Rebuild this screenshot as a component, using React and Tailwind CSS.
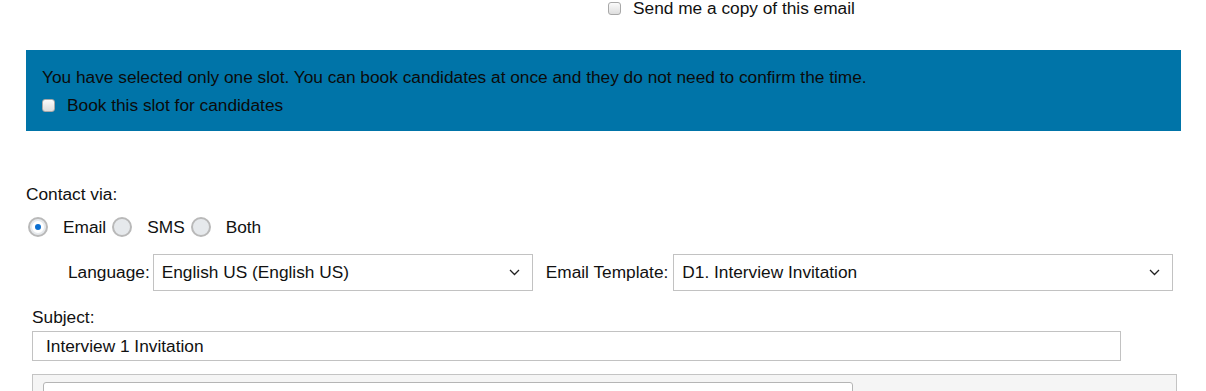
import React, { useState } from 'react'

function Checkbox({ checked, onChange }) {
  return (
    <button
      type="button"
      onClick={onChange}
      className="flex h-[13px] w-[13px] shrink-0 items-center justify-center rounded-[3px] border border-[#a8a8a8] bg-gradient-to-b from-[#fbfbfb] to-[#dedede]"
    >
      {checked && <span className="text-[10px] leading-none text-[#333]">✓</span>}
    </button>
  )
}

function Radio({ checked, onClick, label }) {
  return (
    <label className="flex cursor-pointer items-center" onClick={onClick}>
      <span className="flex h-[20px] w-[20px] items-center justify-center rounded-full border-2 border-[#b9b9b9] bg-[#e6e9ec]">
        {checked && <span className="box-content h-[6px] w-[6px] rounded-full border-[3px] border-white bg-[#0a6ed1]" />}
      </span>
      <span className="ml-[15px]">{label}</span>
    </label>
  )
}

function Select({ value, width }) {
  return (
    <div className={`flex h-[37px] items-center justify-between border border-[#c2c2c2] bg-white pl-[8px] pr-[12px] ${width}`}>
      <span>{value}</span>
      <svg width="11" height="7" viewBox="0 0 11 7" fill="none">
        <path d="M1 1l4.5 4.5L10 1" stroke="#222" strokeWidth="1.3" />
      </svg>
    </div>
  )
}

export default function App() {
  const [copy, setCopy] = useState(false)
  const [book, setBook] = useState(false)
  const [via, setVia] = useState('email')
  const [subject, setSubject] = useState('Interview 1 Invitation')

  return (
    <div className="h-[391px] w-[1206px] overflow-hidden bg-white text-[17.3px] text-[#111] font-['Liberation_Sans',Arial,sans-serif]">
      <div className="-mt-[1px] flex h-[18px] items-center pl-[608px]">
        <Checkbox checked={copy} onChange={() => setCopy((v) => !v)} />
        <span className="ml-[12px] leading-[18px]">Send me a copy of this email</span>
      </div>

      <div className="ml-[26px] mt-[33px] h-[81px] w-[1155px] bg-[#0074a8] pl-[16px] pt-[17px] text-[#0b0b0b]">
        <p className="leading-[20px]">You have selected only one slot. You can book candidates at once and they do not need to confirm the time.</p>
        <div className="mt-[8px] flex items-center">
          <Checkbox checked={book} onChange={() => setBook((v) => !v)} />
          <span className="ml-[12px] leading-[20px]">Book this slot for candidates</span>
        </div>
      </div>

      <div className="pl-[26px] pt-[53px]">
        <p className="leading-[20px]">Contact via:</p>
        <div className="mt-[13px] flex items-center gap-[6px] pl-[2px] leading-[20px]">
          <Radio label="Email" checked={via === 'email'} onClick={() => setVia('email')} />
          <Radio label="SMS" checked={via === 'sms'} onClick={() => setVia('sms')} />
          <Radio label="Both" checked={via === 'both'} onClick={() => setVia('both')} />
        </div>
      </div>

      <div className="mt-[17px] flex items-center pl-[68px]">
        <span className="mr-[3px]">Language:</span>
        <Select value="English US (English US)" width="w-[380px]" />
        <span className="ml-[13px] mr-[5px]">Email Template:</span>
        <Select value="D1. Interview Invitation" width="w-[500px]" />
      </div>

      <div className="pl-[32px] pt-[16px]">
        <p className="leading-[20px]">Subject:</p>
        <input
          value={subject}
          onChange={(e) => setSubject(e.target.value)}
          className="mt-[4px] h-[30px] w-[1089px] border border-[#c2c2c2] bg-white px-[13px] outline-none"
        />
        <div className="mt-[13px] h-[40px] w-[1145px] border border-[#c4c4c4] bg-[#f5f5f5] pl-[10px] pt-[7px]">
          <div className="h-[30px] w-[810px] rounded-[3px] border border-[#b5b5b5] bg-white" />
        </div>
      </div>
    </div>
  )
}
